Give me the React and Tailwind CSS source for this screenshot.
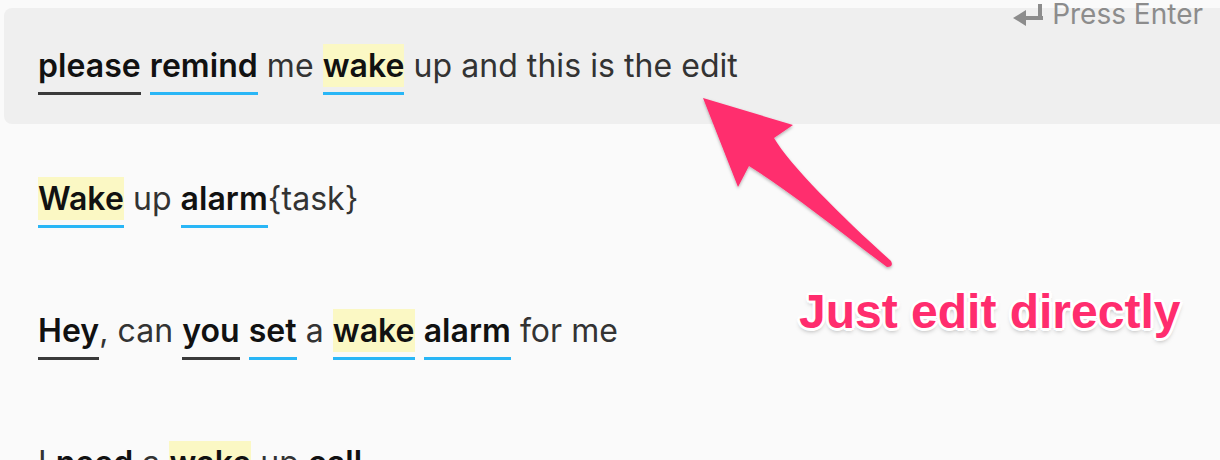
import React from "react";

const FONT = { fontFamily: "Inter, 'Noto Sans', sans-serif" };

function Tok({ children, hl, line }) {
  return (
    <span className="inline-flex flex-col">
      <span className={`font-semibold text-[#111] ${hl ? "bg-[#fbf8c4]" : ""}`}>{children}</span>
      <span
        className={`mt-[5px] h-[3px] ${line === "blue" ? "bg-[#29b6f6]" : line === "dark" ? "bg-[#3a3a3a]" : ""}`}
      />
    </span>
  );
}

function T({ children }) {
  return <span className="text-[#333]">{children}</span>;
}

function Row({ children }) {
  return (
    <div className="flex items-start whitespace-pre text-[32px] leading-[43px] tracking-[0.05px]">{children}</div>
  );
}

export default function App() {
  return (
    <div className="relative h-[460px] w-[1220px] overflow-hidden bg-[#fafafa]" style={FONT}>
      <div className="pl-[4px] pt-[8px]">
        <div className="rounded-l-[8px] bg-[#efefef] pb-[29px] pl-[34px] pt-[36px]">
          <Row>
            <Tok line="dark">please</Tok>
            <T> </T>
            <Tok line="blue">remind</Tok>
            <T> me </T>
            <Tok hl line="blue">wake</Tok>
            <T> up and this is the edit</T>
          </Row>
        </div>
      </div>

      <div className="flex flex-col gap-[81px] pl-[38px] pt-[53px]">
        <Row>
          <Tok hl line="blue">Wake</Tok>
          <T> up </T>
          <Tok line="blue">alarm</Tok>
          <T>{"{task}"}</T>
        </Row>
        <Row>
          <Tok line="dark">Hey</Tok>
          <T>, can </T>
          <Tok line="dark">you</Tok>
          <T> </T>
          <Tok line="blue">set</Tok>
          <T> a </T>
          <Tok hl line="blue">wake</Tok>
          <T> </T>
          <Tok line="blue">alarm</Tok>
          <T> for me</T>
        </Row>
        <Row>
          <T>I </T>
          <Tok>need</Tok>
          <T> a </T>
          <Tok hl>wake</Tok>
          <T> up </T>
          <Tok>call</Tok>
        </Row>
      </div>

      {/* Press Enter hint */}
      <div className="absolute right-[17px] top-0 flex items-center gap-[9px] text-[28px] leading-[28px] text-[#8c8c8c]">
        <svg width="31" height="23" viewBox="0 0 31 23" className="mt-[1px]">
          <polygon points="1,15 14,7 14,23" fill="#8c8c8c" />
          <rect x="12" y="13" width="19" height="4" fill="#8c8c8c" />
          <rect x="26" y="1" width="4" height="16" fill="#8c8c8c" />
        </svg>
        <span>Press Enter</span>
      </div>

      {/* annotation arrow */}
      <svg className="pointer-events-none absolute left-0 top-0" width="1220" height="460" viewBox="0 0 1220 460">
        <defs>
          <filter id="sh" x="-20%" y="-20%" width="140%" height="140%">
            <feDropShadow dx="0" dy="1.5" stdDeviation="1.5" floodColor="#000" floodOpacity="0.3" />
          </filter>
        </defs>
        <path
          d="M703 98 L793 125 L774 138 C790 165 840 215 891 261 Q894 267 887 267 C840 232 795 195 749 166 L738 187 Z"
          fill="#ff2d6e"
          filter="url(#sh)"
        />
      </svg>

      <div
        className="absolute left-[799px] top-[284px] text-[48px] font-bold leading-[56px] text-[#ff2d6e] [text-shadow:3px_0_0_#fff,-3px_0_0_#fff,0_3px_0_#fff,0_-3px_0_#fff,2px_2px_0_#fff,-2px_2px_0_#fff,2px_-2px_0_#fff,-2px_-2px_0_#fff,0_3px_5px_rgba(0,0,0,0.35)]"
        style={{ fontFamily: "'Liberation Sans', Arial, sans-serif" }}
      >
        Just edit directly
      </div>
    </div>
  );
}
